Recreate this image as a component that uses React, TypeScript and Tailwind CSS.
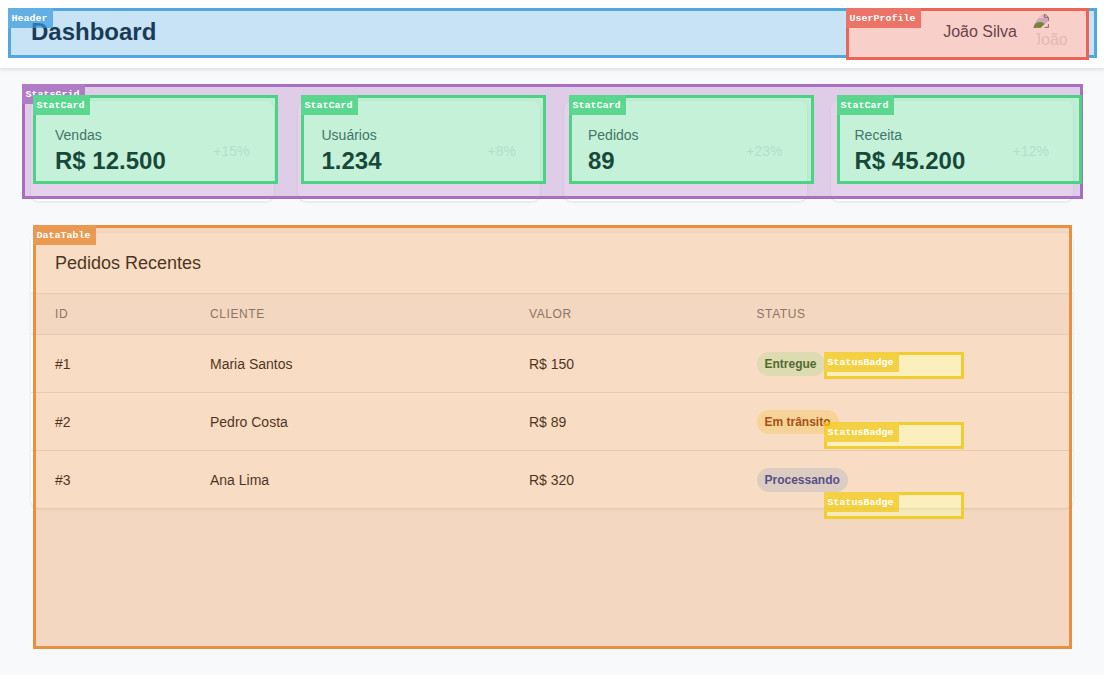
import React from "react";

type Rect = { x: number; y: number; w: number; h: number };
type Region = Rect & { name: string; body: string; tag: string };

const BLUE = { body: "border-[#3498db]/86 bg-[#3498db]/27", tag: "bg-[#3498db]/78" };
const RED = { body: "border-[#e74c3c]/86 bg-[#e74c3c]/27", tag: "bg-[#e74c3c]/78" };
const PURPLE = { body: "border-[#9b59b6]/86 bg-[#9b59b6]/27", tag: "bg-[#9b59b6]/78" };
const GREEN = { body: "border-[#2ecc71]/86 bg-[#2ecc71]/27", tag: "bg-[#2ecc71]/78" };
const ORANGE = { body: "border-[#e67e22]/86 bg-[#e67e22]/27", tag: "bg-[#e67e22]/78" };
const YELLOW = { body: "border-[#f1c40f]/86 bg-[#f1c40f]/27", tag: "bg-[#f1c40f]/78" };

const regions: Region[] = [
  { name: "Header", x: 8, y: 8, w: 1089, h: 50, ...BLUE },
  { name: "UserProfile", x: 846, y: 8, w: 243, h: 52, ...RED },
  { name: "StatsGrid", x: 22, y: 84, w: 1061, h: 115, ...PURPLE },
  { name: "StatCard", x: 33, y: 95, w: 245, h: 89, ...GREEN },
  { name: "StatCard", x: 301, y: 95, w: 245, h: 89, ...GREEN },
  { name: "StatCard", x: 569, y: 95, w: 245, h: 89, ...GREEN },
  { name: "StatCard", x: 837, y: 95, w: 245, h: 89, ...GREEN },
  { name: "DataTable", x: 33, y: 225, w: 1039, h: 424, ...ORANGE },
  { name: "StatusBadge", x: 824, y: 352, w: 140, h: 27, ...YELLOW },
  { name: "StatusBadge", x: 824, y: 422, w: 140, h: 27, ...YELLOW },
  { name: "StatusBadge", x: 824, y: 492, w: 140, h: 27, ...YELLOW },
];

const rectPath = (x: number, y: number, w: number, h: number) => `M${x} ${y}h${w}v${h}h${-w}z`;

// Cuts the holes out of a box so that translucent regions never blend together.
function cutOut(box: Rect, holes: Rect[]) {
  const parts = holes
    .map((o) => {
      const x1 = Math.max(o.x, box.x);
      const y1 = Math.max(o.y, box.y);
      const x2 = Math.min(o.x + o.w, box.x + box.w);
      const y2 = Math.min(o.y + o.h, box.y + box.h);
      return x2 > x1 && y2 > y1 ? rectPath(x1 - box.x, y1 - box.y, x2 - x1, y2 - y1) : "";
    })
    .join("");
  return `path(evenodd, "${rectPath(0, 0, box.w, box.h)}${parts}")`;
}

function RegionBox({ region, later }: { region: Region; later: Region[] }) {
  const tag: Rect = { x: region.x, y: region.y, w: region.name.length * 6 + 9, h: 20 };
  return (
    <div
      className="absolute"
      style={{ left: region.x, top: region.y, width: region.w, height: region.h, clipPath: cutOut(region, later) }}
    >
      <div
        className={`absolute inset-0 border-3 bg-clip-padding ${region.body}`}
        style={{ clipPath: cutOut(region, [tag]) }}
      />
      <div className={`absolute top-0 left-0 h-5 pt-px pl-[3.5px] ${region.tag}`} style={{ width: tag.w }}>
        <span className="block origin-[0_13px] scale-y-90 font-['Liberation_Mono',monospace] text-[10px] leading-[19px] font-bold whitespace-nowrap text-white">
          {region.name}
        </span>
      </div>
    </div>
  );
}

const stats = [
  { label: "Vendas", value: "R$ 12.500", change: "+15%" },
  { label: "Usuários", value: "1.234", change: "+8%" },
  { label: "Pedidos", value: "89", change: "+23%" },
  { label: "Receita", value: "R$ 45.200", change: "+12%" },
];

const orders = [
  { id: "#1", client: "Maria Santos", value: "R$ 150", status: "Entregue", tone: "bg-[#dcfce7] text-[#166534]" },
  { id: "#2", client: "Pedro Costa", value: "R$ 89", status: "Em trânsito", tone: "bg-[#fef3c7] text-[#92400e]" },
  { id: "#3", client: "Ana Lima", value: "R$ 320", status: "Processando", tone: "bg-[#dbeafe] text-[#1e40af]" },
];

function Avatar() {
  return (
    <div className="relative size-10 overflow-hidden rounded-full text-[16px] leading-[18px] text-[#dfe2e7]">
      <svg className="block h-4 w-4" viewBox="0 0 16 16" fill="none">
        <path d="M0 1h11l5 4v5L7 16H0z" fill="#c5cbe8" />
        <path d="M5 6a2 2 0 0 1 3.500-1.500A2 2 0 0 1 11 6z" fill="#eef1fb" />
        <path d="M0 16c1-4 4-6 7-6 2 0 3.500.8 4.500 2L7.500 16z" fill="#469a2b" />
        <path d="M8 16 16 8.500v3L12 16z" fill="#fff" />
        <path d="M12 16l4-4v4z" fill="#c5cbe8" />
        <path d="M0 15.500h8M11.500 15.500h4V12M15.500 9V5.500M11.500 1.500v4h4M5 1.500h6.500l4 4" stroke="#8d7f86" />
      </svg>
      <span className="absolute top-[19px] left-0">João</span>
    </div>
  );
}

const cell = "px-6";
const columns = "grid grid-cols-[155px_319px_227.500px_1fr] items-center";

export default function App() {
  return (
    <div className="relative h-[675px] w-[1104px] overflow-hidden bg-[#f8f9fb] font-['Liberation_Sans',Arial,sans-serif] text-[#111827]">
      <header className="flex h-[69px] items-center justify-between border-b border-[#e5e7eb] bg-white px-[31px] pb-1 shadow-[0_1px_3px_rgba(0,0,0,0.1)]">
        <h1 className="text-2xl font-bold">Dashboard</h1>
        <div className="flex items-center gap-4">
          <span className="text-base text-[#374151]">João Silva</span>
          <Avatar />
        </div>
      </header>

      <main className="px-[31px] pt-8">
        <section className="grid grid-cols-4 gap-6">
          {stats.map((s) => (
            <article
              key={s.label}
              className="flex h-[100px] items-center justify-between rounded-lg bg-white px-6 shadow-[0_1px_3px_rgba(0,0,0,0.1)]"
            >
              <div>
                <p className="text-sm leading-5 text-[#4b5563]">{s.label}</p>
                <p className="text-2xl leading-8 font-bold">{s.value}</p>
              </div>
              <span className="text-sm text-[#e5e7eb]">{s.change}</span>
            </article>
          ))}
        </section>

        <section className="mt-8 rounded-lg bg-white shadow-[0_1px_3px_rgba(0,0,0,0.1)]">
          <h2 className="flex h-[61px] items-center border-b border-[#e5e7eb] px-6 text-lg">Pedidos Recentes</h2>
          <div
            className={`${columns} h-[41px] border-b border-[#e5e7eb] bg-[#f8f9fb] text-xs tracking-[0.6px] text-[#6b7280] uppercase`}
          >
            <span className={cell}>ID</span>
            <span className={cell}>Cliente</span>
            <span className={cell}>Valor</span>
            <span className={cell}>Status</span>
          </div>
          {orders.map((o) => (
            <div
              key={o.id}
              className={`${columns} h-[58px] border-b border-[#e5e7eb] text-sm last:h-[57px] last:border-b-0`}
            >
              <span className={cell}>{o.id}</span>
              <span className={cell}>{o.client}</span>
              <span className={cell}>{o.value}</span>
              <span className={cell}>
                <span className={`block w-fit rounded-full px-2 py-1 text-xs leading-4 font-bold ${o.tone}`}>
                  {o.status}
                </span>
              </span>
            </div>
          ))}
        </section>
      </main>

      {regions.map((r, i) => (
        <RegionBox key={i} region={r} later={regions.slice(i + 1)} />
      ))}
    </div>
  );
}
